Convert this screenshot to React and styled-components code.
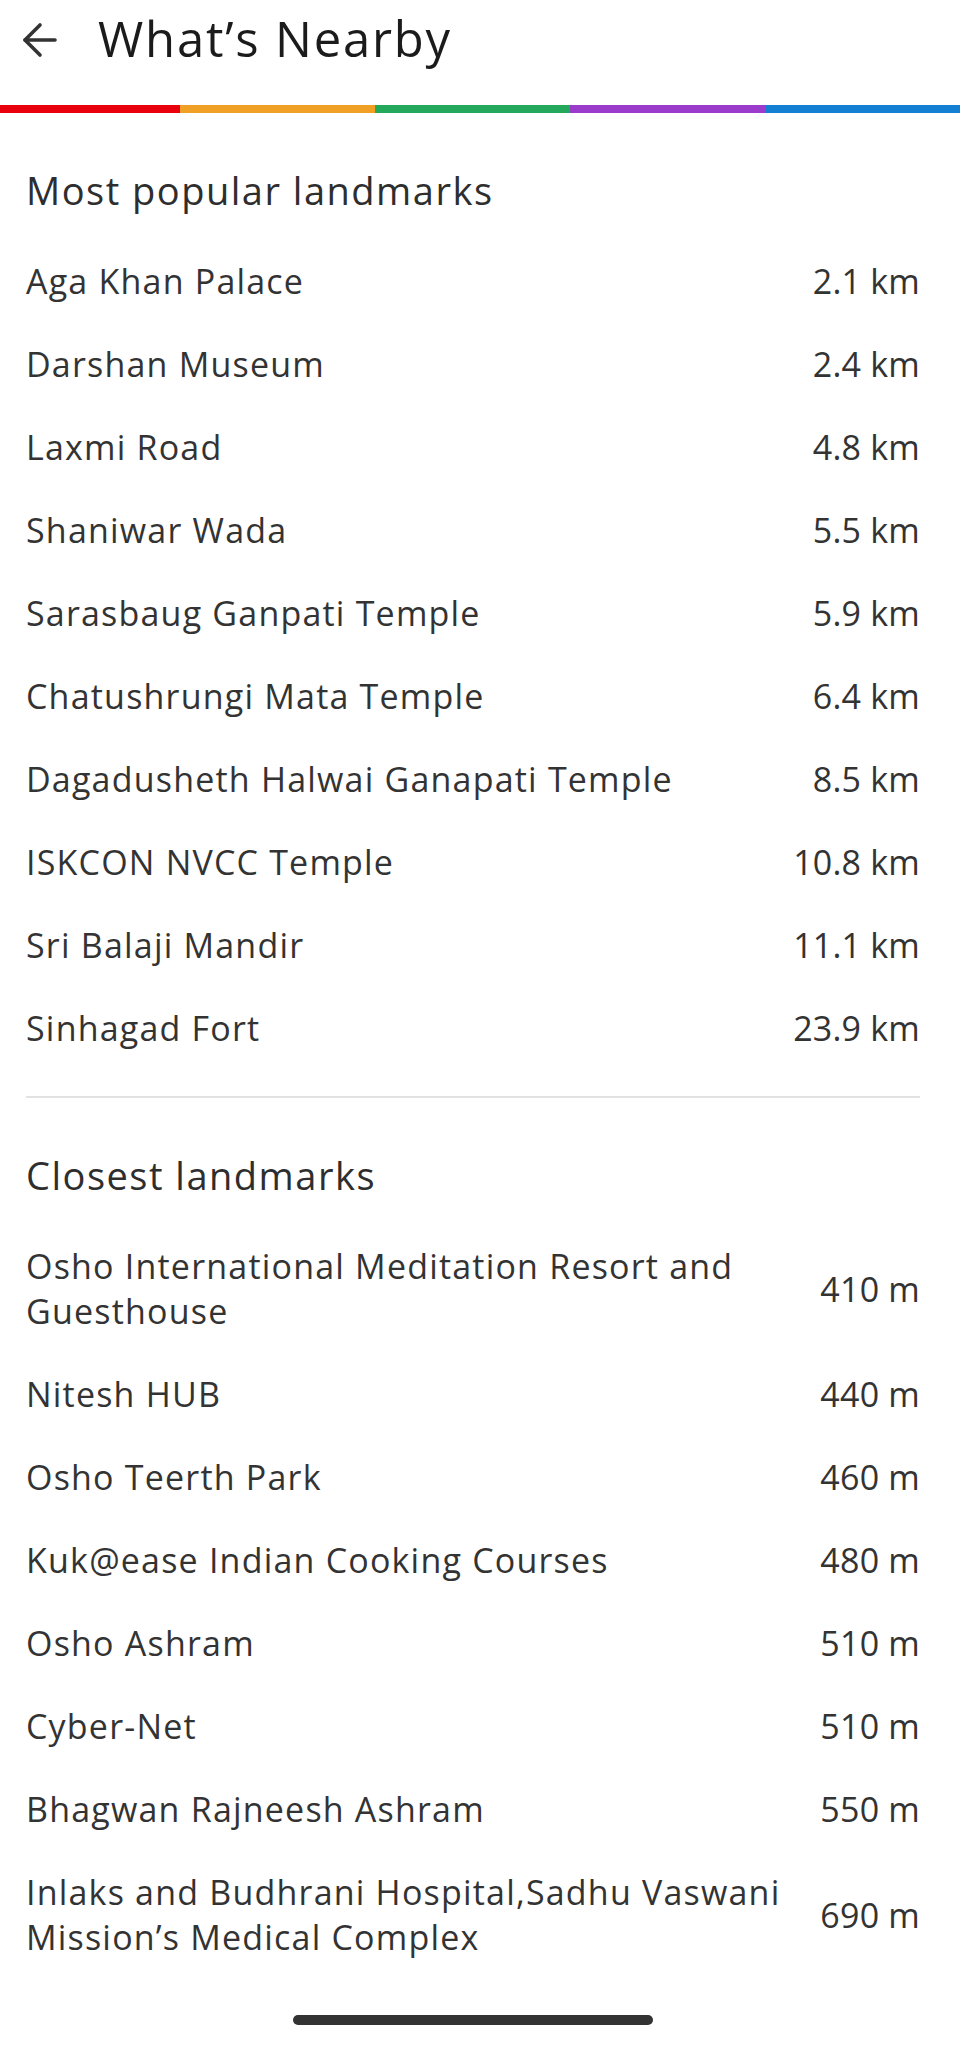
import React from 'react';
import styled, { createGlobalStyle } from 'styled-components';

const GlobalStyle = createGlobalStyle`
  body {
    margin: 0;
    background: #ffffff;
    font-family: "Open Sans", Lato, sans-serif;
  }
`

const Page = styled.div`
  position: relative;
  width: 960px;
  height: 2048px;
  overflow: hidden;
  background: #ffffff;
`

const Header = styled.div`
  display: flex;
  align-items: center;
  height: 80px;
  padding-left: 22px;
`

const BackButton = styled.div`
  display: flex;
  width: 36px;
  height: 36px;
  margin-right: 40px;
  cursor: pointer;
`

const Title = styled.h1`
  margin: 0;
  padding-bottom: 4px;
  font-size: 49px;
  font-weight: 400;
  line-height: 56px;
  letter-spacing: 1.8px;
  color: #1b1b1b;
`

const ColorBar = styled.div`
  display: flex;
  height: 8px;
  margin-top: 25px;
`

const Segment = styled.div`
  flex: ${(p) => (p.$first ? '0 0 180px' : '1')};
  background: ${(p) => p.$color};
`

const Content = styled.div`
  padding: 0 40px 0 26px;
`

const Section = styled.section`
  padding: 55px 0 26px;
`

const Heading = styled.h2`
  margin: 0 0 27px;
  font-size: 38px;
  font-weight: 400;
  line-height: 45px;
  letter-spacing: 1.5px;
  color: #2e2e2e;
`

const Row = styled.div`
  display: flex;
  justify-content: space-between;
  align-items: center;
  padding: 19px 0;
  font-size: 34px;
  line-height: 45px;
  color: #333333;
`

const Name = styled.div`
  flex: 1;
  padding-right: 24px;
  letter-spacing: 1.2px;
`

const Distance = styled.div`
  white-space: nowrap;
  letter-spacing: 0.2px;
`

const Divider = styled.hr`
  margin: 0;
  border: none;
  height: 2px;
  background: #e2e2e2;
`

const NavStrip = styled.div`
  position: absolute;
  left: 0;
  right: 0;
  bottom: 0;
  height: 38px;
  background: #ffffff;
  padding-left: 293px;
`

const HomeIndicator = styled.div`
  width: 360px;
  height: 10px;
  margin-top: 5px;
  border-radius: 5px;
  background: #333333;
`

const colors = ['#e8000d', '#f0a024', '#24a85c', '#9a3bcc', '#137fd2'];

const popular = [
  ['Aga Khan Palace', '2.1 km'],
  ['Darshan Museum', '2.4 km'],
  ['Laxmi Road', '4.8 km'],
  ['Shaniwar Wada', '5.5 km'],
  ['Sarasbaug Ganpati Temple', '5.9 km'],
  ['Chatushrungi Mata Temple', '6.4 km'],
  ['Dagadusheth Halwai Ganapati Temple', '8.5 km'],
  ['ISKCON NVCC Temple', '10.8 km'],
  ['Sri Balaji Mandir', '11.1 km'],
  ['Sinhagad Fort', '23.9 km'],
];

const closest = [
  ['Osho International Meditation Resort and Guesthouse', '410 m'],
  ['Nitesh HUB', '440 m'],
  ['Osho Teerth Park', '460 m'],
  ['Kuk@ease Indian Cooking Courses', '480 m'],
  ['Osho Ashram', '510 m'],
  ['Cyber-Net', '510 m'],
  ['Bhagwan Rajneesh Ashram', '550 m'],
  ['Inlaks and Budhrani Hospital,Sadhu Vaswani Mission’s Medical Complex', '690 m'],
];

const LandmarkList = ({ items }) => (
  <div>
    {items.map(function (item, index) {
      return (
        <Row key={index}>
          <Name>{item[0]}</Name>
          <Distance>{item[1]}</Distance>
        </Row>
      );
    })}
  </div>
);

const App = () => {
  return (
    <Page>
      <GlobalStyle />
      <Header>
        <BackButton>
          <svg width="36" height="36" viewBox="0 0 36 36" fill="none" stroke="#333" strokeWidth="3.6" strokeLinecap="round" strokeLinejoin="round">
            <line x1="3" y1="18" x2="33" y2="18" />
            <polyline points="18,3 3,18 18,33" />
          </svg>
        </BackButton>
        <Title>What’s Nearby</Title>
      </Header>
      <ColorBar>
        {colors.map((c, i) => (
          <Segment key={c} $color={c} $first={i === 0} />
        ))}
      </ColorBar>
      <Content>
        <Section>
          <Heading>Most popular landmarks</Heading>
          <LandmarkList items={popular} />
        </Section>
        <Divider />
        <Section>
          <Heading>Closest landmarks</Heading>
          <LandmarkList items={closest} />
        </Section>
      </Content>
      <NavStrip>
        <HomeIndicator />
      </NavStrip>
    </Page>
  );
};

export default App;
